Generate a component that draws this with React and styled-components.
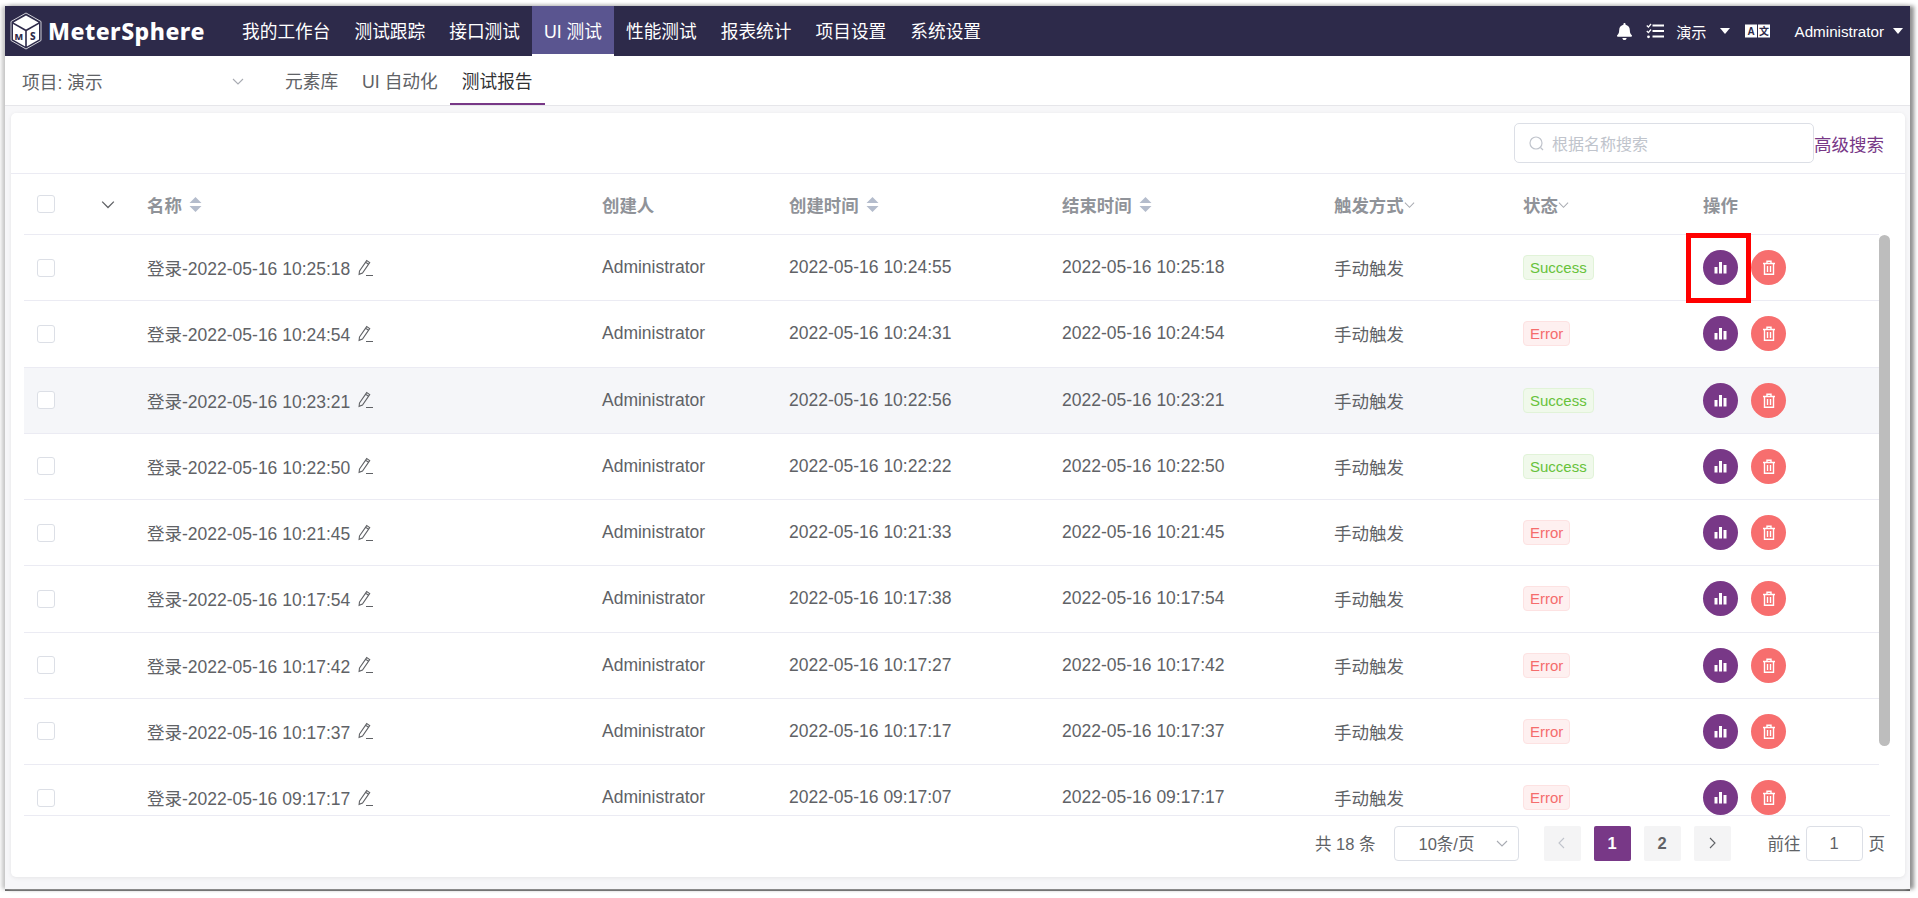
import React from 'react';
import styled, { createGlobalStyle } from 'styled-components';
import { FaBell } from 'react-icons/fa';

const FONT = '"Liberation Sans", "Noto Sans CJK SC", sans-serif';
const COLS = '62px 49px 455px 187px 273px 272px 189px 180px 188px';

const GlobalStyle = createGlobalStyle`
  html, body { margin: 0; padding: 0; background: #fff; height: 100%; overflow: hidden; }
  * { box-sizing: border-box; }
`;

const Frame = styled.div`
  width: 1905px;
  height: 883px;
  margin: 6px 0 0 5px;
  background: #f7f7f9;
  display: flex;
  flex-direction: column;
  font-family: ${FONT};
  color: #606266;
  box-shadow: -3px 0 4px #c4c4c4, 4px 0 4px #8f8f8f, 0 2px 0 #4a4a4a;
`;

const TopBar = styled.header`
  height: 50px;
  background: #2d2a4a;
  color: #fff;
  display: flex;
  align-items: stretch;
  flex: none;
`;

const Logo = styled.div`
  width: 225px;
  display: flex;
  align-items: center;
  gap: 6px;
  padding-left: 5px;
  font-family: "Noto Sans", sans-serif;
  font-weight: 800;
  font-size: 23px;
  letter-spacing: 0.5px;
  flex: none;
`;

const NavTab = styled.a`
  display: flex;
  align-items: center;
  padding: 0 12px;
  font-size: 17.7px;
  color: #fff;
  background: ${p => (p.$active ? '#5a5590' : 'transparent')};
  border-bottom: 2px solid ${p => (p.$active ? '#fff' : 'transparent')};
`;

const TopRight = styled.div`
  margin-left: auto;
  display: flex;
  align-items: center;
  padding-right: 7px;
  font-size: 15.2px;
`;

const Caret = styled.i`
  display: block;
  width: 0;
  height: 0;
  border-left: 5px solid transparent;
  border-right: 5px solid transparent;
  border-top: 6px solid #fff;
  margin-left: ${p => p.$left || 0}px;
`;

const Space = styled.span`
  display: inline-flex;
  margin-left: ${p => p.$left || 0}px;
`;

const SubBar = styled.div`
  height: 50px;
  flex: none;
  background: #fff;
  border-bottom: 1px solid #e6e6ea;
  display: flex;
  align-items: stretch;
  font-size: 17.7px;
`;

const ProjectSelect = styled.div`
  width: 245px;
  margin-right: 23px;
  padding: 0 6px 0 17px;
  display: flex;
  align-items: center;
  justify-content: space-between;
  flex: none;
`;

const SubTab = styled.a`
  display: flex;
  align-items: center;
  padding: 0 12px;
  color: ${p => (p.$active ? '#303133' : '#606266')};
  border-bottom: 2px solid ${p => (p.$active ? '#783887' : 'transparent')};
`;

const Card = styled.section`
  position: relative;
  margin: 7px 5px 12px 6px;
  flex: 1;
  min-height: 0;
  background: #fff;
  border-radius: 5px;
  box-shadow: 0 1px 4px rgba(0, 0, 0, 0.08);
  display: flex;
  flex-direction: column;
`;

const SearchRow = styled.div`
  height: 61px;
  flex: none;
  border-bottom: 1px solid #ebebf3;
  display: flex;
  align-items: center;
  justify-content: flex-end;
  padding: 0 20px 0 0;
`;

const SearchBox = styled.div`
  width: 300px;
  height: 40px;
  border: 1px solid #dcdfe6;
  border-radius: 5px;
  display: flex;
  align-items: center;
  gap: 8px;
  padding-left: 14px;
  color: #c0c4cc;
  font-size: 16px;
`;

const AdvancedLink = styled.a`
  color: #783887;
  font-size: 17.5px;
  width: 71px;
  white-space: nowrap;
`;

const TableWrap = styled.div`
  margin-left: 13px;
  width: 1855px;
  flex: none;
`;

const HeadRow = styled.div`
  height: 61px;
  display: grid;
  grid-template-columns: ${COLS};
  align-items: center;
  border-bottom: 1px solid #ebebf3;
  color: #909399;
  font-weight: 700;
  font-size: 17.4px;
`;

const Rows = styled.div`
  height: 581px;
  overflow: hidden;
`;

const Row = styled.div`
  height: 66.25px;
  display: grid;
  grid-template-columns: ${COLS};
  align-items: center;
  border-bottom: 1px solid #ebebf3;
  font-size: 17.5px;
  background: ${p => (p.$hover ? '#f5f6f9' : '#fff')};
`;

const Cell = styled.div`
  padding-left: 12px;
  display: flex;
  align-items: center;
  white-space: nowrap;
  gap: ${p => p.$gap || 0}px;
`;

const CheckCell = styled.div`
  padding-left: 13px;
  display: flex;
`;

const ExpandCell = styled.div`
  display: flex;
  justify-content: center;
  padding-right: 6px;
`;

const Check = styled.span`
  width: 18px;
  height: 18px;
  background: #fff;
  border: 1px solid #dcdfe6;
  border-radius: 3px;
`;

const Tag = styled.span`
  height: 25px;
  padding: 0 6px;
  display: inline-flex;
  align-items: center;
  font-size: 15px;
  border-radius: 4px;
  color: ${p => (p.$ok ? '#67c23a' : '#f56c6c')};
  background: ${p => (p.$ok ? '#f0f9eb' : '#fef0f0')};
  border: 1px solid ${p => (p.$ok ? '#e1f3d8' : '#fde2e2')};
`;

const RoundBtn = styled.button`
  width: 35px;
  height: 35px;
  padding: 0;
  border: 0;
  border-radius: 50%;
  display: flex;
  align-items: center;
  justify-content: center;
  background: ${p => (p.$danger ? '#f76e6e' : '#783887')};
`;

const Highlight = styled.div`
  position: absolute;
  left: 1675px;
  top: 120px;
  width: 65px;
  height: 70px;
  border: 5px solid #ff0000;
  pointer-events: none;
`;

const ScrollThumb = styled.div`
  position: absolute;
  left: 1868px;
  top: 122px;
  width: 11px;
  height: 511px;
  border-radius: 6px;
  background: #bdbdbd;
`;

const Pager = styled.div`
  flex: 1;
  border-top: 1px solid #ebebf3;
  width: 1866px;
  margin-left: 13px;
  margin-top: -1px;
  display: flex;
  align-items: center;
  justify-content: flex-end;
  padding: 0 5px 7px 0;
  font-size: 16.5px;
  z-index: 1;
`;

const SizeSelect = styled.div`
  width: 125px;
  height: 35px;
  margin-left: 18px;
  border: 1px solid #dcdfe6;
  border-radius: 4px;
  display: flex;
  align-items: center;
  justify-content: space-between;
  padding: 0 10px 0 24px;
`;

const PageBtn = styled.span`
  width: 37px;
  height: 35px;
  margin-left: ${p => p.$left}px;
  border-radius: 2px;
  display: flex;
  align-items: center;
  justify-content: center;
  font-weight: 700;
  background: ${p => (p.$active ? '#783887' : '#f4f4f5')};
  color: ${p => (p.$active ? '#fff' : '#606266')};
`;

const JumpInput = styled.span`
  width: 57px;
  height: 35px;
  margin: 0 6px 0 5px;
  border: 1px solid #dcdfe6;
  border-radius: 4px;
  display: flex;
  align-items: center;
  justify-content: center;
`;

const JumpLabel = styled.span`
  margin-left: 37px;
`;

const Chevron = ({ dir = 'down', size = 12, color = '#a8abb2' }) => {
  const d = {
    down: 'M1 4l5 5 5-5',
    left: 'M8 1L3 6l5 5',
    right: 'M4 1l5 5-5 5',
  }[dir];
  return (
    <svg width={size} height={size} viewBox="0 0 12 12" fill="none" stroke={color} strokeWidth="1.1">
      <path d={d} />
    </svg>
  );
};

const SortIcon = () => (
  <svg width="13" height="17" viewBox="0 0 13 17" fill="#b4bccc">
    <path d="M6.5 1l6 6H.5zM.5 10h12l-6 6z" />
  </svg>
);

const PencilIcon = () => (
  <svg width="17" height="18" viewBox="0 0 17 18" fill="none" stroke="#606266" strokeWidth="1.1">
    <path d="M2.5 12L9.7 1.6l3 2-7.2 10.4-3.4 1.3zM8.6 3.2l3 2M9 16.5h7" />
  </svg>
);

const SearchIcon = () => (
  <svg width="15" height="15" viewBox="0 0 15 15" fill="none" stroke="#c0c4cc" strokeWidth="1.2">
    <circle cx="7" cy="7" r="6" />
    <path d="M11.5 11.5L14 14" />
  </svg>
);

const ChartIcon = () => (
  <svg width="13" height="13" viewBox="0 0 13 13" fill="#fff">
    <rect x="0.5" y="6" width="3" height="6.5" />
    <rect x="5" y="1" width="3" height="11.5" />
    <rect x="9.5" y="4" width="3" height="8.5" />
  </svg>
);

const TrashIcon = () => (
  <svg width="14" height="15" viewBox="0 0 14 15" fill="none" stroke="#fff" strokeWidth="1.4">
    <path d="M1 3.5h12M5 3.2V1.2h4v2M2.5 3.5v10.8h9V3.5M5.5 6v6M8.5 6v6" />
  </svg>
);

const TaskListIcon = () => (
  <svg width="18" height="16" viewBox="0 0 18 16" fill="none" stroke="#fff">
    <path d="M.8 2.5l1.6 1.6L5 1M.8 8l1.6 1.6L5 6.5" strokeWidth="1.3" />
    <circle cx="2.5" cy="13.8" r="1.4" fill="#fff" stroke="none" />
    <path d="M6.5 2.6H18M6.5 8H18M6.5 13.6H18" strokeWidth="2" />
  </svg>
);

const TranslateIcon = () => (
  <svg width="25" height="14" viewBox="0 0 25 14">
    <rect x="0" y="0.5" width="12" height="13" fill="#fff" />
    <rect x="13" y="0.5" width="12" height="13" fill="#fff" />
    <text x="6" y="11" textAnchor="middle" fontSize="10" fontWeight="700" fontFamily="Liberation Sans" fill="#2d2a4a">A</text>
    <text x="19" y="11" textAnchor="middle" fontSize="10" fontWeight="700" fontFamily="Noto Sans CJK SC" fill="#2d2a4a">文</text>
  </svg>
);

const CubeLogo = () => (
  <svg width="32" height="38" viewBox="0 0 32 38">
    <path d="M16 1L31 9.5v19L16 37 1 28.5v-19z" fill="none" stroke="#cfcfd6" strokeWidth="1" />
    <path d="M16 3.5L28.5 10.5 16 17.5 3.5 10.5z" fill="#fff" />
    <path d="M3 12l12.2 7v15.5L3 27.5z" fill="#fff" />
    <path d="M29 12l-12.2 7v15.5L29 27.5z" fill="#fff" />
    <text x="9" y="28" textAnchor="middle" fontSize="9" fontWeight="800" fontFamily="Noto Sans" fill="#2d2a4a">M</text>
    <text x="23" y="28" textAnchor="middle" fontSize="10" fontWeight="800" fontFamily="Noto Sans" fill="#2d2a4a">S</text>
  </svg>
);

const navItems = ['我的工作台', '测试跟踪', '接口测试', 'UI 测试', '性能测试', '报表统计', '项目设置', '系统设置'];

const reports = [
  ['10:25:18', '10:24:55', true],
  ['10:24:54', '10:24:31', false],
  ['10:23:21', '10:22:56', true],
  ['10:22:50', '10:22:22', true],
  ['10:21:45', '10:21:33', false],
  ['10:17:54', '10:17:38', false],
  ['10:17:42', '10:17:27', false],
  ['10:17:37', '10:17:17', false],
  ['09:17:17', '09:17:07', false],
];

export default function App() {
  return (
    <Frame>
      <GlobalStyle />
      <TopBar>
        <Logo>
          <CubeLogo />
          MeterSphere
        </Logo>
        {navItems.map(item => (
          <NavTab key={item} $active={item === 'UI 测试'}>{item}</NavTab>
        ))}
        <TopRight>
          <FaBell size={17} />
          <Space $left={13}><TaskListIcon /></Space>
          <Space $left={12}>演示</Space>
          <Caret $left={13} />
          <Space $left={15}><TranslateIcon /></Space>
          <Space $left={25}>Administrator</Space>
          <Caret $left={9} />
        </TopRight>
      </TopBar>

      <SubBar>
        <ProjectSelect>
          项目: 演示
          <Chevron />
        </ProjectSelect>
        <SubTab>元素库</SubTab>
        <SubTab>UI 自动化</SubTab>
        <SubTab $active>测试报告</SubTab>
      </SubBar>

      <Card>
        <SearchRow>
          <SearchBox>
            <SearchIcon />
            根据名称搜索
          </SearchBox>
          <AdvancedLink>高级搜索</AdvancedLink>
        </SearchRow>

        <TableWrap>
          <HeadRow>
            <CheckCell><Check /></CheckCell>
            <ExpandCell><Chevron size={14} color="#606266" /></ExpandCell>
            <Cell $gap={7}>名称 <SortIcon /></Cell>
            <Cell>创建人</Cell>
            <Cell $gap={7}>创建时间 <SortIcon /></Cell>
            <Cell $gap={7}>结束时间 <SortIcon /></Cell>
            <Cell>触发方式<Chevron size={11} /></Cell>
            <Cell>状态<Chevron size={11} /></Cell>
            <Cell>操作</Cell>
          </HeadRow>
          <Rows>
            {reports.map(([end, start, ok], i) => (
              <Row key={end} $hover={i === 2}>
                <CheckCell><Check /></CheckCell>
                <div />
                <Cell $gap={7}>登录-2022-05-16 {end} <PencilIcon /></Cell>
                <Cell>Administrator</Cell>
                <Cell>2022-05-16 {start}</Cell>
                <Cell>2022-05-16 {end}</Cell>
                <Cell>手动触发</Cell>
                <Cell><Tag $ok={ok}>{ok ? 'Success' : 'Error'}</Tag></Cell>
                <Cell $gap={13}>
                  <RoundBtn><ChartIcon /></RoundBtn>
                  <RoundBtn $danger><TrashIcon /></RoundBtn>
                </Cell>
              </Row>
            ))}
          </Rows>
        </TableWrap>

        <Pager>
          共 18 条
          <SizeSelect>10条/页<Chevron /></SizeSelect>
          <PageBtn $left={25}><Chevron dir="left" color="#c0c4cc" /></PageBtn>
          <PageBtn $left={13} $active>1</PageBtn>
          <PageBtn $left={13}>2</PageBtn>
          <PageBtn $left={13}><Chevron dir="right" color="#606266" /></PageBtn>
          <JumpLabel>前往</JumpLabel>
          <JumpInput>1</JumpInput>
          页
        </Pager>

        <ScrollThumb />
        <Highlight />
      </Card>
    </Frame>
  );
}
